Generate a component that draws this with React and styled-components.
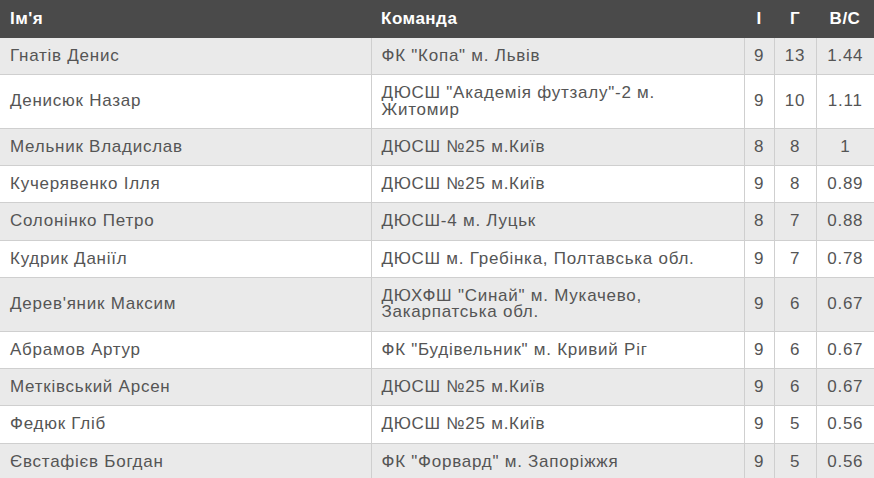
import React from 'react';
import styled, { createGlobalStyle } from 'styled-components';

const players = [
  ['Гнатів Денис', 'ФК "Копа" м. Львів', 9, 13, '1.44'],
  ['Денисюк Назар', 'ДЮСШ "Академія футзалу"-2 м. Житомир', 9, 10, '1.11'],
  ['Мельник Владислав', 'ДЮСШ №25 м.Київ', 8, 8, '1'],
  ['Кучерявенко Ілля', 'ДЮСШ №25 м.Київ', 9, 8, '0.89'],
  ['Солонінко Петро', 'ДЮСШ-4 м. Луцьк', 8, 7, '0.88'],
  ['Кудрик Даніїл', 'ДЮСШ м. Гребінка, Полтавська обл.', 9, 7, '0.78'],
  ['Дерев\'яник Максим', 'ДЮХФШ "Синай" м. Мукачево, Закарпатська обл.', 9, 6, '0.67'],
  ['Абрамов Артур', 'ФК "Будівельник" м. Кривий Ріг', 9, 6, '0.67'],
  ['Метківський Арсен', 'ДЮСШ №25 м.Київ', 9, 6, '0.67'],
  ['Федюк Гліб', 'ДЮСШ №25 м.Київ', 9, 5, '0.56'],
  ['Євстафієв Богдан', 'ФК "Форвард" м. Запоріжжя', 9, 5, '0.56']
];

const GlobalStyle = createGlobalStyle`
  body {
    margin: 0;
    background: #fff;
    font-family: "Liberation Sans", Arial, sans-serif;
  }
`;

const Table = styled.table`
  width: 874px;
  border-collapse: collapse;
  table-layout: fixed;
`;

const HeadRow = styled.tr`
  background: #4a4a4a;
  height: 38px;
`;

const Th = styled.th`
  color: #fff;
  font-size: 17px;
  font-weight: bold;
  letter-spacing: 0.5px;
  text-align: ${(p) => (p.center ? 'center' : 'left')};
  padding: ${(p) => (p.center ? '0' : '0 10px')};
`;

const Row = styled.tr`
  background: ${(p) => (p.odd ? '#fff' : '#eaeaea')};
  border-bottom: 1px solid #cfcfcf;
`;

const Td = styled.td`
  padding: 10px ${(p) => (p.center ? '0' : '10px')};
  color: #555;
  font-size: 17px;
  line-height: 16.3px;
  letter-spacing: 0.75px;
  text-align: ${(p) => (p.center ? 'center' : 'left')};
  vertical-align: middle;
  border-left: ${(p) => (p.first ? 'none' : '1px solid #cfcfcf')};
`;

export default function App() {
  return (
    <>
      <GlobalStyle />
      <Table>
        <colgroup>
          <col style={{ width: 371 }} />
          <col style={{ width: 373 }} />
          <col style={{ width: 30 }} />
          <col style={{ width: 42 }} />
          <col style={{ width: 58 }} />
        </colgroup>
        <thead>
          <HeadRow>
            <Th>Ім'я</Th>
            <Th>Команда</Th>
            <Th center>І</Th>
            <Th center>Г</Th>
            <Th center>В/С</Th>
          </HeadRow>
        </thead>
        <tbody>
          {players.map(([name, team, games, goals, avg], i) => (
            <Row key={name} odd={i % 2 === 1}>
              <Td first>{name}</Td>
              <Td>{team}</Td>
              <Td center>{games}</Td>
              <Td center>{goals}</Td>
              <Td center>{avg}</Td>
            </Row>
          ))}
        </tbody>
      </Table>
    </>
  );
}
